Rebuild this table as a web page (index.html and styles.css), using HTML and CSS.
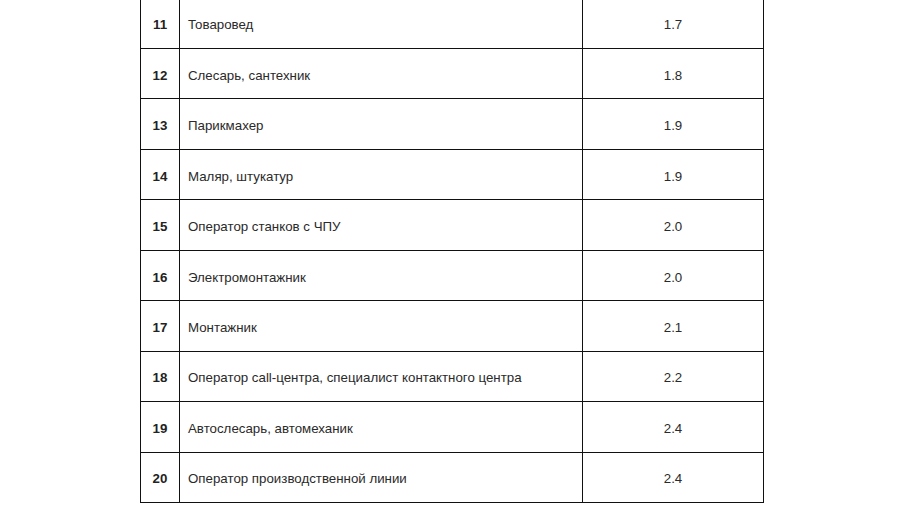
FILE: index.html
```html
<!DOCTYPE html>
<html lang="ru">
<head>
<meta charset="utf-8">
<title>Таблица</title>
<link rel="stylesheet" href="styles.css">
</head>
<body>
<table class="rating">
  <colgroup>
    <col class="c-num">
    <col class="c-name">
    <col class="c-val">
  </colgroup>
  <tbody>
    <tr><td class="num">11</td><td class="name">Товаровед</td><td class="val">1.7</td></tr>
    <tr><td class="num">12</td><td class="name">Слесарь, сантехник</td><td class="val">1.8</td></tr>
    <tr><td class="num">13</td><td class="name">Парикмахер</td><td class="val">1.9</td></tr>
    <tr><td class="num">14</td><td class="name">Маляр, штукатур</td><td class="val">1.9</td></tr>
    <tr><td class="num">15</td><td class="name">Оператор станков с ЧПУ</td><td class="val">2.0</td></tr>
    <tr><td class="num">16</td><td class="name">Электромонтажник</td><td class="val">2.0</td></tr>
    <tr><td class="num">17</td><td class="name">Монтажник</td><td class="val">2.1</td></tr>
    <tr><td class="num">18</td><td class="name">Оператор call-центра, специалист контактного центра</td><td class="val">2.2</td></tr>
    <tr><td class="num">19</td><td class="name">Автослесарь, автомеханик</td><td class="val">2.4</td></tr>
    <tr><td class="num">20</td><td class="name">Оператор производственной линии</td><td class="val">2.4</td></tr>
  </tbody>
</table>
</body>
</html>
```
FILE: styles.css
```css
html, body {
  margin: 0;
  padding: 0;
  background: #fff;
}
body {
  font-family: "Liberation Sans", Arial, sans-serif;
  font-size: 13.3px;
  color: #2a2a2a;
}
.rating {
  border-collapse: collapse;
  table-layout: fixed;
  width: 623px;
  margin: -2.4px 0 0 140px;
}
.rating .c-num { width: 39px; }
.rating .c-name { width: 403px; }
.rating .c-val { width: 181px; }
.rating td {
  border: 1px solid #111;
  height: 45.44px;
  padding: 4px 8px 0;
  vertical-align: middle;
  line-height: 16px;
}
.rating .num {
  padding-left: 0;
  padding-right: 0;
  text-align: center;
  font-weight: bold;
  color: #222;
}
.rating .val {
  text-align: center;
  padding-left: 0;
  padding-right: 0;
}
```
